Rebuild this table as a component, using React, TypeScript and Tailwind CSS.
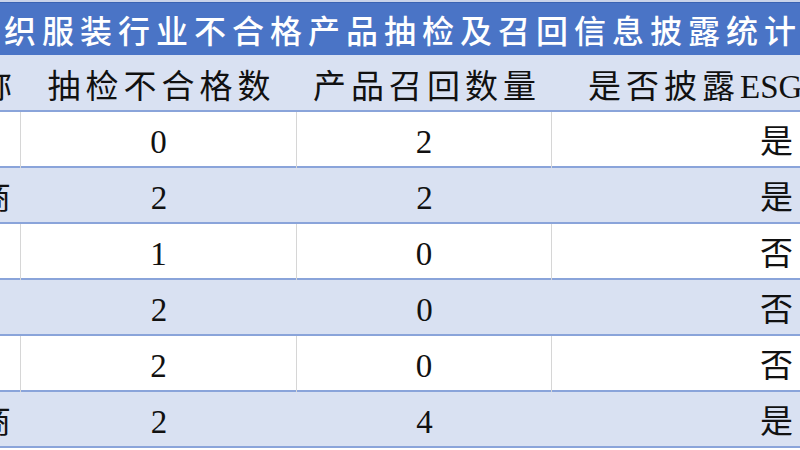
const rows = [
  { name: '', fail: '0', recall: '2', esg: '是' },
  { name: '商', fail: '2', recall: '2', esg: '是' },
  { name: '', fail: '1', recall: '0', esg: '否' },
  { name: '', fail: '2', recall: '0', esg: '否' },
  { name: '', fail: '2', recall: '0', esg: '否' },
  { name: '商', fail: '2', recall: '4', esg: '是' },
]

const serif = { fontFamily: '"Liberation Serif", "Noto Sans CJK SC", serif' }

function Row({ row, shaded }: { row: any; shaded: boolean }) {
  const line = shaded ? '' : 'border-r border-[#d6d6d6]'
  return (
    <div
      className={
        'grid grid-cols-[21px_276px_255px_248px] h-[56px] border-b-2 border-[#8aa4da] text-[33px] text-[#111] ' +
        (shaded ? 'bg-[#d9e1f2]' : 'bg-white')
      }
      style={serif}
    >
      <div className={'flex items-center justify-end overflow-hidden whitespace-nowrap pr-[10px] pt-[6px] ' + line}>
        {row.name}
      </div>
      <div className={'flex items-center justify-center pt-[6px] ' + line}>{row.fail}</div>
      <div className={'flex items-center justify-center pt-[6px] ' + line}>{row.recall}</div>
      <div className="flex items-center justify-end pr-[7px] pt-[6px]">{row.esg}</div>
    </div>
  )
}

export default function App() {
  return (
    <div className="w-[800px] h-[450px] overflow-hidden bg-white">
      <div className="h-[2px] bg-[#c9d3ea]" />
      <div
        className="h-[53px] bg-[#4a74c6] border-t border-[#3a63b3] flex items-center overflow-hidden whitespace-nowrap text-white text-[32px] font-medium tracking-[6px]"
        style={{ fontFamily: '"Noto Sans CJK SC", sans-serif' }}
      >
        <span className="-ml-[34px]">纺织服装行业不合格产品抽检及召回信息披露统计表</span>
      </div>
      <div
        className="grid grid-cols-[21px_276px_255px_248px] h-[57px] bg-[#d9e1f2] border-b-2 border-[#8aa4da] text-[33px] text-[#111] tracking-[5px]"
        style={serif}
      >
        <div className="flex items-center justify-end overflow-hidden whitespace-nowrap pr-[4px] pt-[8px]">名称</div>
        <div className="flex items-center justify-center whitespace-nowrap pt-[8px] pl-[5px]">抽检不合格数</div>
        <div className="flex items-center justify-center whitespace-nowrap pt-[8px] pl-[5px]">产品召回数量</div>
        <div className="flex items-center whitespace-nowrap pl-[36px] pt-[8px]">
          是否披露<span className="tracking-normal">ESG报告</span>
        </div>
      </div>
      {rows.map((row, i) => (
        <Row key={i} row={row} shaded={i % 2 === 1} />
      ))}
    </div>
  )
}
